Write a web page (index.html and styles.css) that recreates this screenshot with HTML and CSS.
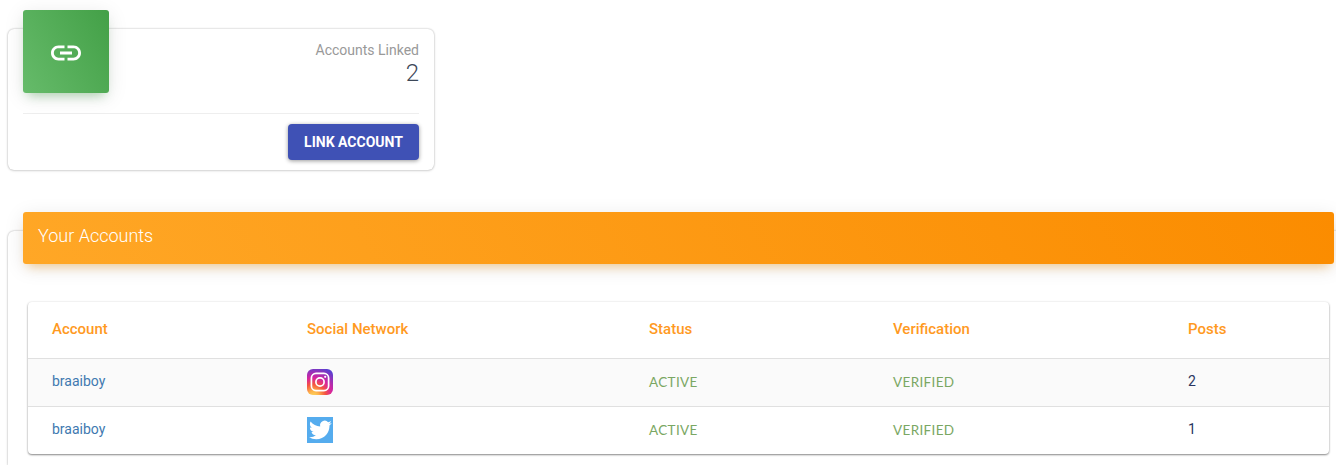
FILE: index.html
```html
<!DOCTYPE html>
<html lang="en">
<head>
<meta charset="utf-8">
<title>Your Accounts</title>
<link rel="stylesheet" href="styles.css">
</head>
<body>
<section class="card stat-card">
  <div class="stat-top">
    <div class="stat-icon">
      <svg viewBox="0 0 24 24" width="36" height="36" fill="#fff"><path d="M3.9 12c0-1.71 1.39-3.1 3.1-3.1h4V7H7c-2.76 0-5 2.24-5 5s2.24 5 5 5h4v-1.9H7c-1.71 0-3.1-1.39-3.1-3.1zM8 13h8v-2H8v2zm9-6h-4v1.9h4c1.71 0 3.1 1.39 3.1 3.1s-1.39 3.1-3.1 3.1h-4V17h4c2.76 0 5-2.24 5-5s-2.24-5-5-5z"/></svg>
    </div>
    <div class="stat-text">
      <p class="stat-label">Accounts Linked</p>
      <p class="stat-value">2</p>
    </div>
  </div>
  <div class="stat-footer">
    <button class="btn" type="button">LINK ACCOUNT</button>
  </div>
</section>

<section class="card accounts-card">
  <header class="accounts-header">Your Accounts</header>
  <div class="table">
    <div class="row head">
      <div>Account</div><div>Social Network</div><div>Status</div><div>Verification</div><div>Posts</div>
    </div>
    <div class="row odd">
      <div class="name">braaiboy</div>
      <div class="net">
        <svg viewBox="0 0 26 26" width="26" height="26">
          <defs>
            <radialGradient id="ig" cx="0.25" cy="1.05" r="1.15">
              <stop offset="0" stop-color="#fdd75f"/>
              <stop offset="0.18" stop-color="#fdb44a"/>
              <stop offset="0.4" stop-color="#f5553f"/>
              <stop offset="0.62" stop-color="#d6249f"/>
              <stop offset="1" stop-color="#5b3fd0"/>
            </radialGradient>
          </defs>
          <rect width="26" height="26" rx="6" fill="url(#ig)"/>
          <rect x="4.4" y="4.4" width="17.2" height="17.2" rx="4.6" fill="none" stroke="#fff" stroke-width="1.7"/>
          <circle cx="13" cy="13" r="4.1" fill="none" stroke="#fff" stroke-width="1.7"/>
          <circle cx="18.2" cy="7.8" r="1.1" fill="#fff"/>
        </svg>
      </div>
      <div class="state">ACTIVE</div><div class="state">VERIFIED</div><div class="posts">2</div>
    </div>
    <div class="row">
      <div class="name">braaiboy</div>
      <div class="net">
        <svg viewBox="0 0 26 26" width="26" height="26">
          <rect width="26" height="26" fill="#55acee"/>
          <g transform="translate(2 1.6) scale(0.95)"><path fill="#fff" d="M23.953 4.57a10 10 0 01-2.825.775 4.958 4.958 0 002.163-2.723c-.951.555-2.005.959-3.127 1.184a4.92 4.92 0 00-8.384 4.482C7.69 8.095 4.067 6.13 1.64 3.162a4.822 4.822 0 00-.666 2.475c0 1.71.87 3.213 2.188 4.096a4.904 4.904 0 01-2.228-.616v.06a4.923 4.923 0 003.946 4.827 4.996 4.996 0 01-2.212.085 4.936 4.936 0 004.604 3.417 9.867 9.867 0 01-6.102 2.105c-.39 0-.779-.023-1.17-.067a13.995 13.995 0 007.557 2.209c9.053 0 13.998-7.496 13.998-13.985 0-.21 0-.42-.015-.63A9.935 9.935 0 0024 4.59z"/></g>
        </svg>
      </div>
      <div class="state">ACTIVE</div><div class="state">VERIFIED</div><div class="posts">1</div>
    </div>
  </div>
</section>
</body>
</html>
```
FILE: styles.css
```css
* { box-sizing: border-box; }
html, body { height: 100%; overflow: hidden; }
body {
  margin: 0;
  padding: 29px 0 0 8px;
  background: #fff;
  font-family: Roboto, "Liberation Sans", sans-serif;
  color: #3c4858;
}
.card {
  background: #fff;
  border-radius: 6px;
  box-shadow: 0 0 2px rgba(0, 0, 0, 0.3), 0 1px 3px rgba(0, 0, 0, 0.1);
}
.stat-card {
  width: 426px;
  height: 141px;
  padding: 0 15px;
}
.stat-top {
  display: flex;
  justify-content: space-between;
  height: 85px;
  border-bottom: 1px solid #eee;
}
.stat-icon {
  width: 86px;
  height: 83px;
  margin-top: -19px;
  display: flex;
  align-items: center;
  justify-content: center;
  padding-top: 3px;
  border-radius: 3px;
  background: linear-gradient(60deg, #66bb6a, #43a047);
  box-shadow: 0 4px 20px rgba(0, 0, 0, 0.1), 0 7px 10px -5px rgba(76, 175, 80, 0.4);
}
.stat-text { text-align: right; padding-top: 13px; }
.stat-label {
  margin: 0;
  font-size: 14px;
  line-height: 16px;
  color: #999;
}
.stat-value {
  margin: 1px 0 0;
  font-size: 24px;
  line-height: 28px;
  font-weight: 300;
  color: #3c4858;
}
.stat-footer {
  display: flex;
  justify-content: flex-end;
  padding-top: 10px;
}
.btn {
  width: 131px;
  height: 36px;
  border: 0;
  padding: 0;
  border-radius: 4px;
  background: #3f51b5;
  color: #fff;
  font-family: inherit;
  font-size: 14px;
  font-weight: 700;
  box-shadow: 0 1px 4px rgba(0, 0, 0, 0.4);
}
.accounts-card {
  display: flow-root;
  width: 1341px;
  height: 234px;
  margin-top: 61px;
  padding: 0 15px;
  border-radius: 6px 6px 0 0;
}
.accounts-header {
  width: 1311px;
  height: 52px;
  margin-top: -19px;
  padding: 0 15px 6px;
  display: flex;
  align-items: center;
  font-size: 18px;
  font-weight: 300;
  color: #fff;
  border-radius: 3px;
  background: linear-gradient(60deg, #ffa726, #fb8c00);
  box-shadow: 0 4px 20px rgba(0, 0, 0, 0.1), 0 7px 10px -5px rgba(255, 152, 0, 0.4);
}
.table {
  width: 1301px;
  margin: 38px 0 0 5px;
  border-radius: 4px;
  background: #fff;
  box-shadow: 0 1px 2px rgba(0, 0, 0, 0.45), 0 0 3px rgba(0, 0, 0, 0.08);
}
.row {
  display: grid;
  grid-template-columns: 255px 342px 244px 295px 1fr;
  align-items: center;
  height: 48px;
  padding-left: 24px;
  font-size: 14px;
  border-top: 1px solid #e0e0e0;
}
.row.head {
  height: 56px;
  border-top: 0;
  color: #ff9a1f;
  font-size: 15px;
  font-weight: 500;
  padding-bottom: 3px;
}
.row.odd { background: #fafafa; }
.name { color: #4079b0; padding-bottom: 3px; }
.net { display: flex; padding-bottom: 2px; }
.net svg { display: block; }
.state {
  color: #7aa763;
  font-family: Lato, Roboto, sans-serif;
  font-size: 13.5px;
  letter-spacing: 0.35px;
  padding-bottom: 1px;
}
.posts { color: #2a3560; padding-bottom: 3px; }
```
